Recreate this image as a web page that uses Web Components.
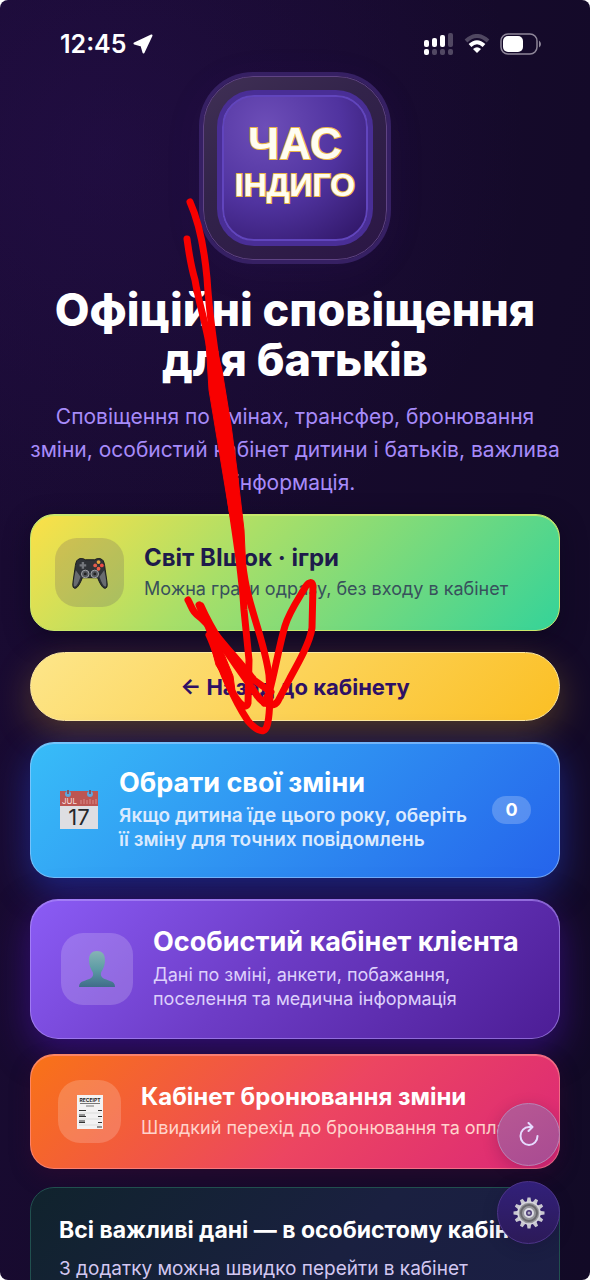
<!DOCTYPE html>
<html lang="uk">
<head>
<meta charset="utf-8">
<meta name="viewport" content="width=device-width, initial-scale=1">
<title>Час Індиго</title>
<style>
	html,
	body {
		margin: 0;
		height: 100%;
		background: #fff;
	}

	body {
		font-family: Inter, "Liberation Sans", sans-serif;
		color: #fff;
	}

	.yellow {
		--card-bg: linear-gradient(135deg, #fde047 0%, #a9df68 38%, #34d399 100%);
		--card-border: #c8e86c;
		--card-shadow: 0 8px 24px rgba(10, 5, 25, .5);
		--card-pad: 23px 24px;
		--tile: 69px;
		--tile-bg: rgba(46, 16, 101, .15);
		--title-color: #1e1b4b;
		--text-color: #38515c;
		--radius: 24px;
	}

	.blue {
		--card-bg: linear-gradient(135deg, #38bdf8 0%, #2563eb 100%);
		--card-border: rgba(160, 205, 255, .6);
		--card-shadow: 0 12px 36px rgba(37, 70, 235, .45);
		--card-pad: 23px 28px;
		--tile: 40px;
		--title-size: 27px;
		--title-line: 34px;
		--text-size: 19px;
		--text-weight: 600;
		--text-color: #dbeafe;
		--radius: 24px;
	}

	.purple {
		--card-bg: linear-gradient(135deg, #8b5cf6 0%, #6d3cc6 45%, #4c1d95 100%);
		--card-border: rgba(180, 150, 250, .6);
		--card-shadow: 0 12px 36px rgba(80, 20, 190, .5);
		--card-pad: 25px 30px;
		--tile: 72px;
		--tile-bg: rgba(255, 255, 255, .18);
		--title-size: 27px;
		--title-line: 34px;
		--text-color: #ddd0fb;
		--radius: 28px;
	}

	.orange {
		--card-bg: linear-gradient(135deg, #f97316 0%, #ec4561 55%, #db2777 100%);
		--card-border: rgba(255, 150, 150, .6);
		--card-shadow: 0 8px 20px rgba(60, 10, 50, .4);
		--card-pad: 25px 27px;
		--tile: 63px;
		--tile-bg: rgba(255, 255, 255, .18);
		--text-color: #ffd3cb;
		--radius: 24px;
	}
</style>
</head>
<body>
<app-screen>
	<status-bar slot="status" time="12:45"></status-bar>
	<brand-logo></brand-logo>
	<page-intro>
		<span slot="title">Офіційні сповіщення для батьків</span>
		<span slot="text">Сповіщення по змінах, трансфер, бронювання зміни, особистий кабінет дитини і батьків, важлива інформація.</span>
	</page-intro>
	<card-list>
		<link-card class="yellow">
			<app-icon slot="icon" name="gamepad"></app-icon>
			<span slot="title">Світ ВІшок · ігри</span>
			<span slot="text">Можна грати одразу, без входу в кабінет</span>
		</link-card>
		<back-button>← Назад до кабінету</back-button>
		<link-card class="blue">
			<app-icon slot="icon" name="calendar"></app-icon>
			<span slot="title">Обрати свої зміни</span>
			<span slot="text">Якщо дитина їде цього року, оберіть її зміну для точних повідомлень</span>
			<count-pill slot="end">0</count-pill>
		</link-card>
		<link-card class="purple">
			<app-icon slot="icon" name="person"></app-icon>
			<span slot="title">Особистий кабінет клієнта</span>
			<span slot="text">Дані по зміні, анкети, побажання, поселення та медична інформація</span>
		</link-card>
		<link-card class="orange">
			<app-icon slot="icon" name="receipt"></app-icon>
			<span slot="title">Кабінет бронювання зміни</span>
			<span slot="text">Швидкий перехід до бронювання та оплати</span>
		</link-card>
		<info-panel>
			<span slot="title">Всі важливі дані — в особистому кабінеті</span>
			<span slot="text">З додатку можна швидко перейти в кабінет</span>
		</info-panel>
	</card-list>
	<round-button slot="floating" label="Оновити" class="refresh"><app-icon name="refresh"></app-icon></round-button>
	<round-button slot="floating" label="Налаштування"><app-icon name="gear"></app-icon></round-button>
	<marker-arrow slot="overlay"></marker-arrow>
</app-screen>

<script>
class BaseElement extends HTMLElement {
	constructor() {
		super();
		this.attachShadow({ mode: "open" });
		const tmpl = document.createElement("template");
		tmpl.innerHTML = this.constructor.markup;
		this.shadowRoot.appendChild(tmpl.content.cloneNode(true));
	}
}

class AppScreen extends BaseElement {
	static get markup() {
		return /* html */`
		<style>
		:host {
			display: block;
			position: relative;
			height: 100vh;
			overflow: hidden;
			border-radius: 8px;
			background:
				radial-gradient(circle at 18% 12%, rgba(46, 18, 92, .35), transparent 420px),
				linear-gradient(100deg, #1a0b34 0%, #160a2c 50%, #120a26 100%);
		}

		main {
			display: flex;
			flex-direction: column;
			padding: 0 30px;
		}

		.floating {
			position: absolute;
			right: 30px;
			bottom: 36px;
			display: flex;
			flex-direction: column;
			gap: 15px;
		}
		</style>
		<slot name="status"></slot>
		<main><slot></slot></main>
		<div class="floating"><slot name="floating"></slot></div>
		<slot name="overlay"></slot>
		`;
	}
}
customElements.define("app-screen", AppScreen);

class StatusBar extends BaseElement {
	static get markup() {
		return /* html */`
		<style>
		:host {
			display: flex;
			align-items: center;
			justify-content: space-between;
			height: 40px;
			padding: 24px 48px 8px 60px;
			font-size: 25px;
			line-height: 40px;
			font-weight: 600;
		}

		div {
			display: flex;
			align-items: center;
			gap: 6px;
		}

		.signals {
			gap: 10px;
		}

		svg {
			display: block;
		}
		</style>
		<div>
			<time></time>
			<svg width="21" height="20" viewBox="0 0 21 20"><path d="M18.500 1.500 1.500 9.500 8.500 11.500 10.500 18.500Z" fill="#fff" stroke="#fff" stroke-width="2" stroke-linejoin="round"/></svg>
		</div>
		<div class="signals">
			<svg width="30" height="22" viewBox="0 0 30 22" fill="#fff">
				<rect x="0" y="7" width="5" height="7" rx="2"/><rect x="8" y="5" width="5" height="9" rx="2"/><rect x="16" y="2" width="5" height="12" rx="2"/>
				<rect x="24" y="0" width="5" height="14" rx="2" opacity=".25"/>
				<rect x="0" y="16" width="5" height="6" rx="2"/>
				<g opacity=".25"><rect x="8" y="16" width="5" height="6" rx="2"/><rect x="16" y="16" width="5" height="6" rx="2"/><rect x="24" y="16" width="5" height="6" rx="2"/></g>
			</svg>
			<svg width="26" height="20" viewBox="0 0 26 20" fill="none" stroke="#fff" stroke-width="4">
				<path d="M2 7Q13-3 24 7" opacity=".25"/><path d="M6 11.500Q13 5 20 11.500"/><path d="M9 15Q13 11.500 17 15L13 19Z" fill="#fff" stroke="none"/>
			</svg>
			<svg width="42" height="22" viewBox="0 0 42 22">
				<rect x="1" y="1" width="36" height="20" rx="7" fill="none" stroke="#8e8699" stroke-width="1.500"/>
				<rect x="3" y="3" width="20" height="16" rx="5" fill="#fff"/><path d="M39 7.500Q41 9 41 11T39 14.500Z" fill="#8e8699"/>
			</svg>
		</div>
		`;
	}

	connectedCallback() {
		this.shadowRoot.querySelector("time").textContent = this.getAttribute("time");
	}
}
customElements.define("status-bar", StatusBar);

class BrandLogo extends BaseElement {
	static get markup() {
		return /* html */`
		<style>
		:host {
			display: grid;
			place-items: center;
			align-self: center;
			box-sizing: border-box;
			width: 184px;
			height: 184px;
			margin: 4px 0;
			border: 1px solid #5f4384;
			border-radius: 50px;
			background: linear-gradient(145deg, #403055 0%, #32234a 40%, #2b1645 100%);
			box-shadow: 0 0 0 4px #362063, 0 8px 40px rgba(80, 40, 160, .1);
		}

		.plate {
			display: flex;
			flex-direction: column;
			align-items: center;
			justify-content: center;
			box-sizing: border-box;
			width: 146px;
			height: 146px;
			padding: 0 0 8px;
			border: 2px solid #6145bd;
			border-radius: 32px;
			background: radial-gradient(circle at 30% 22%, #6d4eb8 0%, #50339f 50%, #2c1360 100%);
			background-origin: border-box;
			box-shadow: 0 0 0 5px #492e96;
			font-family: "Liberation Sans", sans-serif;
			font-weight: 700;
			color: #fffdf2;
			-webkit-text-stroke: 2px #e9b548;
			paint-order: stroke fill;
		}

		.top {
			font-size: 44px;
			line-height: 42px;
		}

		.bottom {
			font-size: 32px;
			line-height: 40px;
		}
		</style>
		<div class="plate"><span class="top">ЧАС</span><span class="bottom">ІНДИГО</span></div>
		`;
	}
}
customElements.define("brand-logo", BrandLogo);

class PageIntro extends BaseElement {
	static get markup() {
		return /* html */`
		<style>
		:host {
			display: block;
			padding: 21px 0 15px;
			text-align: center;
		}

		h1 {
			margin: 0;
			font-size: 45px;
			line-height: 50px;
			font-weight: 800;
		}

		p {
			margin: 15px -4px 0;
			font-size: 21px;
			line-height: 33px;
			color: #a78bfa;
		}
		</style>
		<h1><slot name="title"></slot></h1>
		<p><slot name="text"></slot></p>
		`;
	}
}
customElements.define("page-intro", PageIntro);

class CardList extends BaseElement {
	static get markup() {
		return /* html */`
		<style>
		:host {
			display: flex;
			flex-direction: column;
			gap: 21px;
		}
		</style>
		<slot></slot>
		`;
	}
}
customElements.define("card-list", CardList);

class LinkCard extends BaseElement {
	static get markup() {
		return /* html */`
		<style>
		:host {
			display: block;
		}

		:host(.orange) {
			margin: -6px 0 -3px;
		}

		a {
			display: flex;
			align-items: center;
			gap: 20px;
			padding: var(--card-pad);
			border: 1px solid var(--card-border);
			border-radius: var(--radius);
			background: var(--card-bg);
			background-origin: border-box;
			box-shadow: var(--card-shadow), inset 0 1px 0 var(--card-border);
			color: inherit;
			text-decoration: none;
		}

		.tile {
			display: grid;
			place-items: center;
			flex: none;
			width: var(--tile);
			height: var(--tile);
			border-radius: 22px;
			background: var(--tile-bg, none);
		}

		.body {
			flex: 1;
			min-width: 0;
		}

		.title,
		.text {
			display: block;
		}

		.title {
			font-size: var(--title-size, 24px);
			line-height: var(--title-line, 30px);
			font-weight: 700;
			color: var(--title-color, #fff);
			margin-bottom: 4px;
			white-space: nowrap;
		}

		.text {
			padding-bottom: 2px;
			font-size: var(--text-size, 18px);
			line-height: 24px;
			font-weight: var(--text-weight, 400);
			color: var(--text-color);
		}

		:host(.yellow) .text,
		:host(.orange) .text {
			white-space: nowrap;
		}
		</style>
		<a href="#">
			<span class="tile"><slot name="icon"></slot></span>
			<span class="body">
				<span class="title"><slot name="title"></slot></span>
				<span class="text"><slot name="text"></slot></span>
			</span>
			<slot name="end"></slot>
		</a>
		`;
	}
}
customElements.define("link-card", LinkCard);

class CountPill extends BaseElement {
	static get markup() {
		return /* html */`
		<style>
		:host {
			display: block;
			width: 39px;
			border-radius: 14px;
			background: rgba(255, 255, 255, .22);
			font-size: 18px;
			line-height: 28px;
			font-weight: 700;
			text-align: center;
		}
		</style>
		<slot></slot>
		`;
	}
}
customElements.define("count-pill", CountPill);

class BackButton extends BaseElement {
	static get markup() {
		return /* html */`
		<style>
		:host {
			display: block;
		}

		button {
			display: block;
			width: 100%;
			padding: 20px 20px 19px;
			border: 1px solid #fde9a0;
			border-radius: 35px;
			background: linear-gradient(135deg, #fde68a 0%, #fbbf24 100%);
			background-origin: border-box;
			box-shadow: 0 12px 36px rgba(251, 191, 36, .26);
			font: 700 22px/28px Inter, "Liberation Sans", sans-serif;
			color: #2e1065;
		}
		</style>
		<button type="button"><slot></slot></button>
		`;
	}
}
customElements.define("back-button", BackButton);

class InfoPanel extends BaseElement {
	static get markup() {
		return /* html */`
		<style>
		:host {
			display: block;
			min-height: 160px;
			padding: 26px 28px;
			border: 1px solid #21504f;
			border-radius: 24px;
			background: linear-gradient(135deg, #10232d 0%, #1a2040 50%, #1b1d45 100%);
			white-space: nowrap;
		}

		h2 {
			margin: 0 0 8px;
			font-size: 23px;
			line-height: 32px;
			font-weight: 700;
		}

		p {
			margin: 0;
			font-size: 19px;
			line-height: 30px;
			color: #d3c8f2;
		}
		</style>
		<h2><slot name="title"></slot></h2>
		<p><slot name="text"></slot></p>
		`;
	}
}
customElements.define("info-panel", InfoPanel);

class RoundButton extends BaseElement {
	static get markup() {
		return /* html */`
		<style>
		:host {
			display: block;
		}

		button {
			display: grid;
			place-items: center;
			width: 63px;
			height: 63px;
			padding: 0;
			border: 1px solid #4d3489;
			border-radius: 50%;
			background: linear-gradient(#32207a, #2c1a58);
			background-origin: border-box;
			box-shadow: 0 4px 16px rgba(20, 5, 50, .2);
		}

		:host(.refresh) button {
			border-color: #b584b5;
			background: linear-gradient(150deg, #b55693 20%, #a84a92 100%);
			background-origin: border-box;
		}
		</style>
		<button type="button"><slot></slot></button>
		`;
	}

	connectedCallback() {
		this.shadowRoot.querySelector("button").setAttribute("aria-label", this.getAttribute("label"));
	}
}
customElements.define("round-button", RoundButton);

const teeth = Array.from({ length: 12 }, (_, i) =>
	`<path d="M14.500.5h3l.8 5h-4.600z" transform="rotate(${i * 30} 16 16)"/>`).join("");

const ICONS = {
	gamepad: `<svg width="36" height="36" viewBox="0 0 38 38">
		<path d="M6 5Q8 3 12 4L14 5H24L26 4Q30 3 32 5Q34 6 35 15L37 29Q38 36 34 35Q31 34 27 24H11Q7 34 4 35Q0 36 1 29L3 15Q4 6 6 5Z" fill="#303338" stroke="#17191d"/>
		<path d="M4 16Q1 29 2 33Q5 35 9 23ZM34 16Q37 29 36 33Q33 35 29 23Z" fill="#686b70"/>
		<path d="M8 11H15M11.500 7.500V14.500" stroke="#74777d" stroke-width="2.500"/>
		<circle cx="14" cy="20" r="4" fill="#55585e" stroke="#a5a7ab"/><circle cx="24" cy="20" r="4" fill="#55585e" stroke="#a5a7ab"/>
		<circle cx="14" cy="20" r="1.500" fill="#222"/><circle cx="24" cy="20" r="1.500" fill="#222"/>
		<circle cx="28" cy="7.500" r="2" fill="#e5a43e"/><circle cx="31.500" cy="11" r="2" fill="#ed4d45"/><circle cx="28" cy="14.500" r="2" fill="#ed5f4a"/><circle cx="24.500" cy="11" r="2" fill="#e35b4b"/>
	</svg>`,
	calendar: `<svg width="40" height="40" viewBox="0 0 40 40">
		<rect x="1" y="1" width="38" height="38" fill="#dedee2"/><path d="M1 1H39V16H1Z" fill="#bd5552"/>
		<circle cx="9" cy="4" r="3" fill="#5ca7df"/><circle cx="31" cy="4" r="3" fill="#5ca7df"/><path d="M9 0V4M31 0V4" stroke="#863f40" stroke-width="1.500"/>
		<path d="M22 14V10M25 14V9M28 14V10M31 14V9M34 14V10M37 14V9" stroke="#e09a97" stroke-width=".8"/>
		<text x="3" y="14" font-family="Inter, sans-serif" font-size="8" fill="#f6dedd">JUL</text>
		<text x="20" y="35" text-anchor="middle" font-family="Inter, sans-serif" font-size="22" fill="#26272b">17</text>
	</svg>`,
	person: `<svg width="38" height="38" viewBox="0 0 38 38">
		<defs><linearGradient id="g" x2="0" y2="1"><stop stop-color="#86b3b5"/><stop offset=".5" stop-color="#5d9ca5"/><stop offset="1" stop-color="#3f6c8a"/></linearGradient></defs>
		<path d="M19 1C24 1 27 4 27 10C27 17 24 20 23 23C22 28 27 29 32 31Q37 32 37 37H1Q1 32 6 31C11 29 16 28 15 23C14 20 11 17 11 10C11 4 14 1 19 1Z" fill="url(#g)"/>
	</svg>`,
	receipt: `<svg width="28" height="36" viewBox="0 0 28 36">
		<path d="M1 1H27V35H1Z" fill="#f3f2f3"/>
		<text x="14" y="8" text-anchor="middle" font-family="Inter, sans-serif" font-size="5" font-weight="700" fill="#222">RECEIPT</text>
		<path d="M4 9.500H24M10 12H18" stroke="#777" stroke-width="1"/>
		<path d="M3 16.500H10M22 16.500H26M3 21H9M3 22.500H10M22 22.500H26M3 27H9M3 28.500H9M22 28.500H26M21 33H26" stroke="#333" stroke-width="1"/>
		<path d="M3 19H25M3 25H25M3 31H25" stroke="#ccc" stroke-width=".6"/>
	</svg>`,
	refresh: `<svg width="22" height="26" viewBox="0 0 22 26" fill="none" stroke="#e6dbff" stroke-width="2" stroke-linecap="round" stroke-linejoin="round">
		<path d="M14 5H11A8.500 9 0 1 0 19.500 14"/><path d="M10.500 1 14.500 5 10.500 9"/>
	</svg>`,
	gear: `<svg width="32" height="32" viewBox="0 0 32 32">
		<g fill="#c9c8d0">${teeth}</g>
		<circle cx="16" cy="16" r="11" fill="#96969b" stroke="#d6d5dc" stroke-width="1.500"/>
		<circle cx="16" cy="16" r="8" fill="none" stroke="#68676d" stroke-width="2"/>
		<circle cx="16" cy="16" r="4" fill="#4b3a77" stroke="#dddce5" stroke-width="2"/><circle cx="16" cy="16" r="1.500" fill="#b3b0c0"/>
	</svg>`,
};

class AppIcon extends BaseElement {
	static get markup() {
		return /* html */`
		<style>
		:host,
		svg {
			display: block;
		}
		</style>
		<div></div>
		`;
	}

	connectedCallback() {
		this.shadowRoot.querySelector("div").innerHTML = ICONS[this.getAttribute("name")];
	}
}
customElements.define("app-icon", AppIcon);

// hand-drawn arrow lying over the page
class MarkerArrow extends BaseElement {
	static get markup() {
		return /* html */`
		<style>
		:host {
			position: absolute;
			left: calc(50% - 115px);
			top: 190px;
			pointer-events: none;
		}

		svg {
			display: block;
		}
		</style>
		<svg width="150" height="550" viewBox="180 190 150 550" fill="none" stroke="#f80000" stroke-width="7" stroke-linecap="round" stroke-linejoin="round" aria-hidden="true">
			<path d="M190 202C199 222 204 246 207 278C209 310 214 350 223 400C230 450 234 490 237 530L245 580C250 610 264 640 269 675C271 700 269 720 267 726C264 736 254 728 248 721C236 703 224 680 213 638L199 605"/>
			<path d="M187 239C189 252 190 263 195 280C199 305 206 322 211 355C214 400 222 440 228 480C234 530 241 560 244 610L249 660 248 703C246 710 240 704 236 698C223 680 218 654 209 635"/>
			<path d="M188 600C192 607 192 612 201 618L210 627C226 648 240 662 254 680L271 692"/>
			<path d="M201 606C216 640 240 670 256 694C263 705 274 708 278 701L290 678C300 660 310 642 312 628L313 586C312 581 309 582 306 586C299 598 289 612 285 626C279 646 275 672 269 693L264 703"/>
			<path d="M209 320 206 342 209 390 219 450 229 510 237 550 246 572 244 530 237 470 231 425 222 370Z" fill="#f80000" stroke-width="1"/>
			<path d="M204 618 216 665 236 698 233 676 217 637Z" fill="#f80000" stroke-width="1"/>
		</svg>
		`;
	}
}
customElements.define("marker-arrow", MarkerArrow);
</script>
</body>
</html>
